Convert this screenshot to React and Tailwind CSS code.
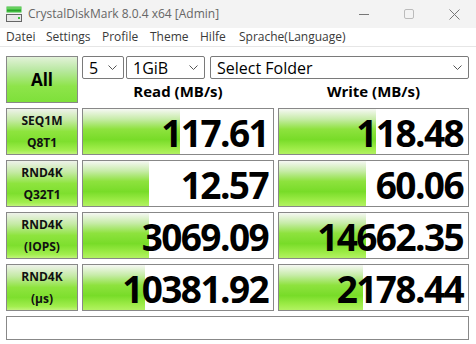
import React from "react";

const barBg =
  "bg-[linear-gradient(to_bottom,#f6f8f4_0%,#c8ecaa_22%,#8ee23e_45%,#78dc28_68%,#9eec48_88%,#b2f262_100%)]";
const labelBg =
  "bg-[linear-gradient(to_bottom,#eef2ea_0%,#c4eaa4_25%,#8ee43e_50%,#7edf2e_72%,#a2ee4e_92%,#c0f47a_100%)]";

function Chevron() {
  return (
    <svg width="9" height="5" viewBox="0 0 9 5" className="shrink-0">
      <polyline points="0.5,0.5 4.5,4.5 8.5,0.5" fill="none" stroke="#555" strokeWidth="1" />
    </svg>
  );
}

function Select({ w, text }) {
  return (
    <div
      className={`${w} h-[23px] bg-white border border-[#7a7a7a] rounded-[2px] flex items-center justify-between pl-[6px] pr-[6px] text-[16px] text-black leading-none`}
    >
      <span>{text}</span>
      <Chevron />
    </div>
  );
}

function Label({ l1, l2 }) {
  return (
    <div
      className={`h-[47px] border border-[#888] ${labelBg} flex flex-col items-center justify-center text-[12px] font-bold text-[#111] leading-[22px]`}
    >
      <span>{l1}</span>
      <span>{l2}</span>
    </div>
  );
}

function Value({ bar, value }) {
  return (
    <div className="h-[47px] border border-[#888] bg-white relative flex items-center justify-end pr-[5px]">
      <div className={`absolute left-0 top-0 bottom-0 ${bar} ${barBg}`} />
      <span className="relative pt-[2px] text-[37px] font-bold text-black leading-none tracking-[-1.6px]">
        {value}
      </span>
    </div>
  );
}

const rows = [
  { l1: "SEQ1M", l2: "Q8T1", r: "117.61", rb: "w-[97px]", w: "118.48", wb: "w-[97px]" },
  { l1: "RND4K", l2: "Q32T1", r: "12.57", rb: "w-[66px]", w: "60.06", wb: "w-[87px]" },
  { l1: "RND4K", l2: "(IOPS)", r: "3069.09", rb: "w-[66px]", w: "14662.35", wb: "w-[87px]" },
  { l1: "RND4K", l2: "(µs)", r: "10381.92", rb: "w-[62px]", w: "2178.44", wb: "w-[84px]" },
];

export default function App() {
  return (
    <div className="w-[476px] h-[344px] bg-white overflow-hidden font-['Open_Sans',sans-serif]">
      {/* Title bar */}
      <div className="h-[28px] bg-[#f3f3f3] flex items-center">
        <svg width="16" height="16" viewBox="0 0 16 16" className="ml-[6px] mr-[6px]">
          <rect x="0.5" y="0.5" width="15" height="6" fill="#3fbf3f" />
          <rect x="1" y="1.5" width="14" height="1" fill="#8fe07f" />
          <rect x="1" y="4" width="14" height="1" fill="#2e9e2e" />
          <rect x="0.5" y="8.5" width="15" height="7" fill="#e8e8e8" stroke="#666" />
          <rect x="12" y="11" width="2" height="2" fill="#3fbf3f" />
        </svg>
        <span className="text-[12px] text-[#666] leading-none">CrystalDiskMark 8.0.4 x64 [Admin]</span>
        <div className="flex-1" />
        <svg width="10" height="10" viewBox="0 0 10 10" className="mr-[35px]">
          <line x1="0" y1="5.5" x2="10" y2="5.5" stroke="#777" strokeWidth="1" />
        </svg>
        <svg width="10" height="10" viewBox="0 0 10 10" className="mr-[35px]">
          <rect x="0.5" y="0.5" width="9" height="9" rx="1.5" fill="none" stroke="#bbb" strokeWidth="1" />
        </svg>
        <svg width="11" height="11" viewBox="0 0 11 11" className="mr-[16px]">
          <path d="M0.5 0.5 L10.5 10.5 M10.5 0.5 L0.5 10.5" stroke="#777" strokeWidth="1" />
        </svg>
      </div>
      {/* Menu */}
      <div className="h-[19px] flex items-center border-b border-[#e6e6e6] text-[12px] text-[#3a3a3a] leading-none">
        <span className="ml-[6px] w-[40px]">Datei</span>
        <span className="w-[56px]">Settings</span>
        <span className="w-[48px]">Profile</span>
        <span className="w-[50px]">Theme</span>
        <span className="w-[39px]">Hilfe</span>
        <span>Sprache(Language)</span>
      </div>
      {/* Content */}
      <div className="pt-[9px] pl-[6px] grid grid-cols-[72px_192px_191px] gap-x-[4px] gap-y-[5px]">
        <div
          className={`h-[47px] border border-[#888] bg-[linear-gradient(to_bottom,#e2f2d8_0%,#b8e8a0_30%,#8ee44a_65%,#7ee03a_100%)] flex items-center justify-center text-[17px] font-bold text-black`}
        >
          All
        </div>
        <div className="col-span-2 flex flex-col">
          <div className="flex">
            <Select w="w-[42px]" text="5" />
            <div className="w-[2px]" />
            <Select w="w-[79px]" text="1GiB" />
            <div className="w-[5px]" />
            <div className="flex-1">
              <Select w="w-full" text="Select Folder" />
            </div>
          </div>
          <div className="grid grid-cols-[192px_191px] gap-x-[4px] flex-1 items-center">
            <div className="text-center text-[15px] font-bold text-black leading-none pt-[1px]">Read (MB/s)</div>
            <div className="text-center text-[15px] font-bold text-black leading-none pt-[1px]">Write (MB/s)</div>
          </div>
        </div>
        {rows.map((r, i) => (
          <React.Fragment key={i}>
            <Label l1={r.l1} l2={r.l2} />
            <Value bar={r.rb} value={r.r} />
            <Value bar={r.wb} value={r.w} />
          </React.Fragment>
        ))}
        <div className="col-span-3 h-[24px] border border-[#888] bg-white" />
      </div>
    </div>
  );
}
